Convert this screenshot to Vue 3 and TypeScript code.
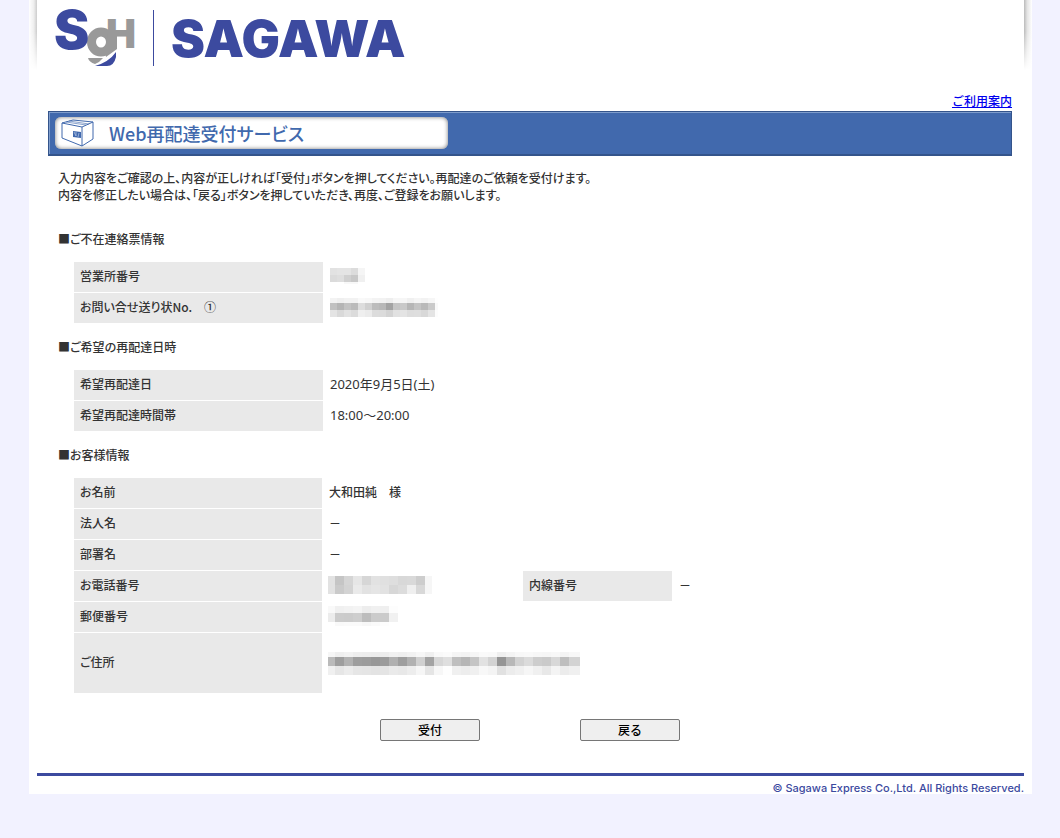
<script setup lang="ts">
interface Mosaic {
  cols: number[]
  rows: number[]
  shades: number[][]
}

interface Cell {
  x: number
  y: number
  w: number
  h: number
  fill: string
}

const sevens = (n: number): number[] => Array.from({ length: n }, () => 7)
const nines = (n: number): number[] => [7, ...Array.from({ length: n - 1 }, () => 9)]
const sum = (list: number[]): number => list.reduce((a, b) => a + b, 0)

const office: Mosaic = {
  cols: sevens(5),
  rows: [7, 7, 2],
  shades: [
    [226, 228, 228, 220, 245],
    [219, 222, 208, 200, 240],
    [255, 255, 248, 248, 255],
  ],
}

const slip: Mosaic = {
  cols: [...sevens(15), 3],
  rows: [5, 7, 7],
  shades: [
    [243, 239, 242, 242, 249, 247, 243, 242, 238, 246, 246, 240, 245, 242, 246, 254],
    [193, 181, 195, 187, 221, 208, 188, 184, 163, 197, 201, 182, 196, 185, 202, 249],
    [228, 217, 226, 219, 239, 235, 220, 219, 211, 225, 228, 221, 222, 216, 228, 252],
  ],
}

const phone: Mosaic = {
  cols: [...nines(11), 7],
  rows: [9, 9],
  shades: [
    [226, 197, 213, 230, 214, 226, 224, 222, 216, 217, 205, 246],
    [226, 202, 211, 234, 226, 229, 226, 215, 220, 239, 216, 246],
  ],
}

const postal: Mosaic = {
  cols: [...nines(7), 9],
  rows: [7, 9, 4],
  shades: [
    [249, 240, 242, 244, 237, 240, 239, 253],
    [236, 204, 203, 206, 189, 203, 203, 241],
    [255, 249, 250, 250, 247, 250, 253, 255],
  ],
}

const address: Mosaic = {
  cols: [...nines(28), 2],
  rows: [5, 9, 9],
  shades: [
    [246, 239, 242, 238, 237, 236, 237, 241, 239, 242, 247, 240, 249, 251, 245, 243, 246, 250, 249, 239, 244, 248, 249, 247, 246, 248, 244, 248, 248],
    [186, 158, 178, 158, 156, 151, 155, 176, 158, 177, 208, 163, 215, 223, 191, 182, 197, 226, 211, 149, 184, 210, 219, 205, 202, 216, 190, 211, 211],
    [240, 230, 236, 230, 229, 227, 228, 234, 232, 237, 246, 229, 247, 254, 240, 237, 240, 248, 244, 225, 236, 240, 246, 240, 232, 244, 236, 240, 240],
  ],
}

function cells(m: Mosaic): Cell[] {
  return m.shades.flatMap((line, r) =>
    line.map((shade, c) => ({
      x: sum(m.cols.slice(0, c)),
      y: sum(m.rows.slice(0, r)),
      w: m.cols[c],
      h: m.rows[r],
      fill: `rgb(${shade},${shade},${shade})`,
    })),
  )
}

const picture = (m: Mosaic) => ({ width: sum(m.cols), height: sum(m.rows), cells: cells(m) })

interface Row {
  label: string
  value?: string
  mosaic?: ReturnType<typeof picture>
  extra?: { label: string; value: string }
  kind?: string
}

interface Section {
  title: string
  kind: string
  rows: Row[]
}

const sections: Section[] = [
  {
    title: '■ご不在連絡票情報',
    kind: 'pair',
    rows: [
      { label: '営業所番号', mosaic: picture(office) },
      { label: 'お問い合せ送り状No.　①', mosaic: picture(slip) },
    ],
  },
  {
    title: '■ご希望の再配達日時',
    kind: 'pair',
    rows: [
      { label: '希望再配達日', value: '2020年9月5日(土)', kind: 'number' },
      { label: '希望再配達時間帯', value: '18:00～20:00', kind: 'number' },
    ],
  },
  {
    title: '■お客様情報',
    kind: 'quad',
    rows: [
      { label: 'お名前', value: '大和田純　様' },
      { label: '法人名', value: '－' },
      { label: '部署名', value: '－' },
      { label: 'お電話番号', mosaic: picture(phone), extra: { label: '内線番号', value: '－' } },
      { label: '郵便番号', mosaic: picture(postal) },
      { label: 'ご住所', mosaic: picture(address), kind: 'tall' },
    ],
  },
]
</script>

<template>
  <div class="page">
    <span class="edge edge-left"></span>
    <span class="edge edge-right"></span>

    <header class="header">
      <svg class="logo" width="360" height="60" viewBox="0 0 360 60" role="img" aria-label="SgH SAGAWA">
        <g class="logo-text">
          <ellipse cx="47" cy="32" rx="9.500" ry="10" fill="none" stroke="#999" stroke-width="9" />
          <path d="M54 22h9v17l-11 8-1-5z" fill="#999" />
          <path d="M34 48h15q-3 4-8 6-6-2-7-6z" fill="#999" />
          <path d="M62 42v5q-2 9-9 9H41q14-4 21-14z" class="blue-fill" />
          <text class="gray" x="52" y="38" font-size="40">H</text>
          <text class="blue" x="0" y="39" font-size="53">S</text>
          <path d="M99.500 0v56" class="rule" />
          <text class="blue" x="117" y="47" font-size="51">SAGAWA</text>
        </g>
      </svg>
    </header>

    <main class="main">
      <div class="guide"><a href="#">ご利用案内</a></div>

      <div class="banner">
        <h1 class="banner-title">
          <svg class="box" width="34" height="28" viewBox="0 0 34 28" aria-hidden="true">
            <g fill="none" stroke="#4169ad" stroke-linejoin="round">
              <path d="M1 4 12 1 32 3 21 8z" />
              <path d="M1 4v15l20 8V8M32 3v17l-11 7" />
              <path d="M5 3l20 3M8 2l20 3" opacity=".6" />
            </g>
            <path d="M12 12l8 1v6l-8-1z" fill="#4169ad" />
            <path d="M13 13l2 4M15 13v4M18 14l-1 4" stroke="#b9caea" stroke-width=".7" />
          </svg>
          <span>Web再配達受付サービス</span>
        </h1>
      </div>

      <p class="lead">
        入力内容をご確認の上、内容が正しければ「受付」ボタンを押してください。再配達のご依頼を受付けます。<br />
        内容を修正したい場合は、「戻る」ボタンを押していただき、再度、ご登録をお願いします。
      </p>

      <section v-for="section in sections" :key="section.title" class="section">
        <h2 class="section-title">{{ section.title }}</h2>
        <table class="info" :class="section.kind">
          <colgroup>
            <col class="c-label" />
            <col class="c-value" />
            <col v-if="section.kind === 'quad'" class="c-sub" />
            <col v-if="section.kind === 'quad'" />
          </colgroup>
          <tbody>
            <tr v-for="row in section.rows" :key="row.label" :class="row.kind">
              <th scope="row">{{ row.label }}</th>
              <td :colspan="section.kind === 'quad' && !row.extra ? 3 : 1">
                <svg
                  v-if="row.mosaic"
                  class="mosaic"
                  :width="row.mosaic.width"
                  :height="row.mosaic.height"
                  shape-rendering="crispEdges"
                  aria-hidden="true"
                >
                  <rect
                    v-for="(c, i) in row.mosaic.cells"
                    :key="i"
                    :x="c.x"
                    :y="c.y"
                    :width="c.w"
                    :height="c.h"
                    :fill="c.fill"
                  />
                </svg>
                <template v-else>{{ row.value }}</template>
              </td>
              <template v-if="row.extra">
                <th scope="row">{{ row.extra.label }}</th>
                <td>{{ row.extra.value }}</td>
              </template>
            </tr>
          </tbody>
        </table>
      </section>

      <div class="actions">
        <button type="button">受付</button>
        <button type="button">戻る</button>
      </div>
    </main>

    <footer class="footer">© Sagawa Express Co.,Ltd. All Rights Reserved.</footer>
  </div>
</template>

<style>
body {
  margin: 0;
  background: #f2f2ff;
}
</style>

<style scoped>
.page {
  position: relative;
  box-sizing: border-box;
  margin: 0 28px 44px 29px;
  padding: 0 8px;
  background: #fff;
  color: #333;
  font-family: "Noto Sans CJK JP", sans-serif;
  font-size: 12px;
  font-weight: 500;
  line-height: 18px;
}

.edge {
  position: absolute;
  top: 0;
  width: 8px;
  height: 70px;
  -webkit-mask-image: linear-gradient(#000 45%, transparent);
  mask-image: linear-gradient(#000 45%, transparent);
}

.edge-left {
  left: 0;
  background: linear-gradient(to left, #ccc, #eee 40%, #fff);
}

.edge-right {
  right: 0;
  background: linear-gradient(to right, #bbb, #e4e4e4 40%, #fff);
}

.header {
  padding: 10px 0 0 17px;
}

.logo {
  display: block;
  overflow: visible;
}

.logo-text {
  font-family: Inter, "Liberation Sans", Arial, sans-serif;
  font-weight: 900;
}

.blue,
.blue-fill {
  fill: #3c4a9f;
}

.gray {
  fill: #999;
}

.rule {
  stroke: #3c4a9f;
}

.main {
  padding: 22px 12px 32px 11px;
}

.guide {
  text-align: right;
}

.guide a {
  color: #00e;
}

.banner {
  box-sizing: border-box;
  height: 45px;
  margin-top: 1px;
  padding: 5px 6px;
  border: 1px solid #34548b;
  border-bottom-width: 2px;
  background: #4169ad;
  box-shadow: inset 1px 1px #7f9dcc;
}

.banner-title {
  display: flex;
  align-items: center;
  gap: 14px;
  box-sizing: border-box;
  width: 393px;
  height: 32px;
  margin: 0;
  padding-left: 6px;
  border-radius: 6px;
  background: #fff;
  box-shadow: inset 0 0 4px #777;
  color: #4169ad;
  font-size: 18px;
  font-weight: 500;
  line-height: 30px;
  font-feature-settings: "palt";
}

.lead {
  margin: 13px 0 0 10px;
  line-height: 17px;
  font-feature-settings: "palt";
}

.section {
  margin-top: 14px;
}

.lead + .section {
  margin-top: 27px;
}

.section-title {
  margin: 0 0 13px 10px;
  font-size: 12px;
  font-weight: 500;
  line-height: 18px;
  font-feature-settings: "palt";
}

.info {
  width: calc(100% - 25px);
  margin-left: 25px;
  border-collapse: separate;
  border-spacing: 1px;
  table-layout: fixed;
}

.c-label {
  width: 249px;
}

.quad .c-label {
  width: 248px;
}

.quad .c-value {
  width: 199px;
}

.quad .c-sub {
  width: 149px;
}

th,
td {
  box-sizing: border-box;
  height: 30px;
  padding: 0 6px 2px;
  text-align: left;
  vertical-align: middle;
  font-weight: 500;
}

th {
  background: #e9e9e9;
  font-feature-settings: "palt";
}

.number td {
  font-family: "Noto Sans", "Noto Sans CJK JP", sans-serif;
  font-size: 13px;
  font-weight: 400;
}

.tall th,
.tall td {
  height: 60px;
}

.tall td {
  padding-bottom: 0;
}

.mosaic {
  display: block;
}

.quad .mosaic {
  margin-left: -1px;
}

.actions {
  display: flex;
  justify-content: center;
  gap: 100px;
  margin-top: 25px;
}

button {
  box-sizing: border-box;
  width: 100px;
  height: 22px;
  padding: 0;
  border: 1px solid #767676;
  border-radius: 2px;
  background: #efefef;
  color: #000;
  font: inherit;
}

.footer {
  border-top: 3px solid #3c4a9f;
  padding-top: 6px;
  color: #3c4a9f;
  font-family: Inter, "Liberation Sans", Arial, sans-serif;
  font-size: 11px;
  font-weight: 500;
  line-height: 12px;
  text-align: right;
}
</style>
